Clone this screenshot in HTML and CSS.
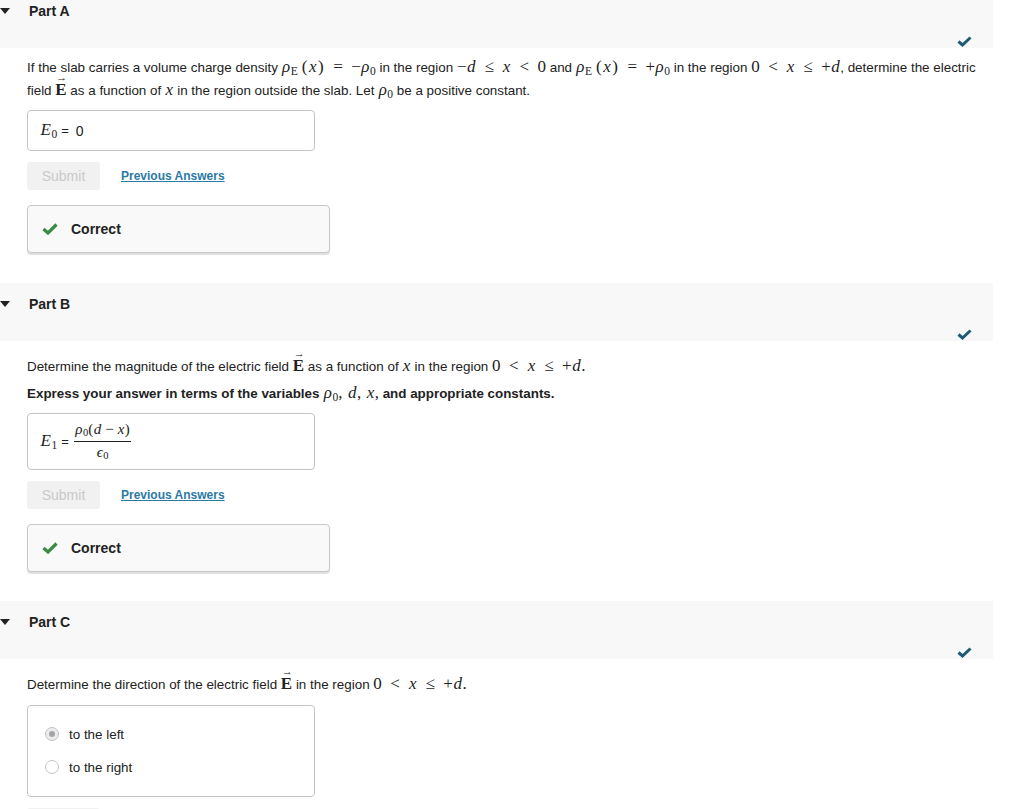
FILE: index.html
```html
<!DOCTYPE html>
<html>
<head>
<meta charset="utf-8">
<link rel="stylesheet" href="styles.css">
</head>
<body>
<div class="part part-first">
  <div class="part-head">
    <div class="head-title"><span class="caret"></span><span class="title">Part A</span></div>
    <div class="head-status"><svg class="done" width="15" height="11" viewBox="0 0 15 11"><polyline points="1.5,5.5 5.5,9 13.5,1.5" fill="none" stroke="#1f5a74" stroke-width="3"/></svg></div>
  </div>
  <div class="part-body">
    <p class="prompt">If the slab carries a volume charge density <span class="m"><span class="mi">ρ</span><span class="sub up">E</span><span class="paren">(<span class="mi">x</span>)</span><span class="rel">=</span>−<span class="mi">ρ</span><span class="sub">0</span></span> in the region <span class="m">−<span class="mi">d</span><span class="rel">≤</span><span class="mi">x</span><span class="rel">&lt;</span>0</span> and <span class="m"><span class="mi">ρ</span><span class="sub up">E</span><span class="paren">(<span class="mi">x</span>)</span><span class="rel">=</span>+<span class="mi">ρ</span><span class="sub">0</span></span> in the region <span class="m">0<span class="rel">&lt;</span><span class="mi">x</span><span class="rel">≤</span>+<span class="mi">d</span></span>, determine the electric<br>field <span class="m"><span class="vec">E</span></span> as a function of <span class="m"><span class="mi">x</span></span> in the region outside the slab. Let <span class="m"><span class="mi">ρ</span><span class="sub">0</span></span> be a positive constant.</p>
    <div class="answer-box box-a">
      <span class="m"><span class="mi">E</span><span class="sub">0</span></span><span class="eq">=</span><span class="val">0</span>
    </div>
    <div class="actions"><span class="submit">Submit</span><a class="prev" href="#">Previous Answers</a></div>
    <div class="feedback"><svg width="16" height="12" viewBox="0 0 16 12"><polyline points="1.5,6 6,10 14.5,1.5" fill="none" stroke="#3a8a43" stroke-width="3.2"/></svg><span>Correct</span></div>
  </div>
</div>

<div class="part">
  <div class="part-head">
    <div class="head-title"><span class="caret"></span><span class="title">Part B</span></div>
    <div class="head-status"><svg class="done" width="15" height="11" viewBox="0 0 15 11"><polyline points="1.5,5.5 5.5,9 13.5,1.5" fill="none" stroke="#1f5a74" stroke-width="3"/></svg></div>
  </div>
  <div class="part-body">
    <p class="prompt">Determine the magnitude of the electric field <span class="m"><span class="vec">E</span></span> as a function of <span class="m"><span class="mi">x</span></span> in the region <span class="m">0<span class="rel">&lt;</span><span class="mi">x</span><span class="rel">≤</span>+<span class="mi">d</span>.</span></p>
    <p class="prompt strong">Express your answer in terms of the variables <span class="m"><span class="mi">ρ</span><span class="sub">0</span><span class="comma">,</span><span class="mi">d</span><span class="comma">,</span><span class="mi">x</span>,</span> and appropriate constants.</p>
    <div class="answer-box box-b">
      <span class="m"><span class="mi">E</span><span class="sub">1</span></span><span class="eq">=</span><span class="frac"><span class="num"><span class="mi">ρ</span><span class="sub">0</span>(<span class="mi">d</span><span class="bin">−</span><span class="mi">x</span>)</span><span class="den"><span class="mi">ϵ</span><span class="sub">0</span></span></span>
    </div>
    <div class="actions"><span class="submit">Submit</span><a class="prev" href="#">Previous Answers</a></div>
    <div class="feedback"><svg width="16" height="12" viewBox="0 0 16 12"><polyline points="1.5,6 6,10 14.5,1.5" fill="none" stroke="#3a8a43" stroke-width="3.2"/></svg><span>Correct</span></div>
  </div>
</div>

<div class="part">
  <div class="part-head">
    <div class="head-title"><span class="caret"></span><span class="title">Part C</span></div>
    <div class="head-status"><svg class="done" width="15" height="11" viewBox="0 0 15 11"><polyline points="1.5,5.5 5.5,9 13.5,1.5" fill="none" stroke="#1f5a74" stroke-width="3"/></svg></div>
  </div>
  <div class="part-body">
    <p class="prompt">Determine the direction of the electric field <span class="m"><span class="vec">E</span></span> in the region <span class="m">0<span class="rel">&lt;</span><span class="mi">x</span><span class="rel">≤</span>+<span class="mi">d</span>.</span></p>
    <div class="choices">
      <div class="choice"><span class="radio checked"></span><span>to the left</span></div>
      <div class="choice"><span class="radio"></span><span>to the right</span></div>
    </div>
    <div class="actions"><span class="submit submit-blank"></span></div>
  </div>
</div>
</body>
</html>
```

FILE: styles.css
```css
html, body {
  margin: 0;
  padding: 0;
  background: #ffffff;
}
body {
  font-family: "Liberation Sans", Arial, sans-serif;
  font-size: 13.4px;
  color: #222222;
  overflow: hidden;
}
.part {
  margin-top: 29px;
}
.part-first {
  margin-top: -10px;
}
.part-first + .part {
  margin-top: 30px;
}
.part-head {
  width: 993px;
  height: 58px;
  box-sizing: border-box;
  background: #f8f8f8;
  padding-top: 13px;
  display: flex;
  flex-direction: column;
}
.head-title {
  display: flex;
  align-items: center;
  height: 16px;
}
.caret {
  width: 0;
  height: 0;
  border-left: 5px solid transparent;
  border-right: 5px solid transparent;
  border-top: 6px solid #222;
}
.title {
  margin-left: 19px;
  font-weight: bold;
  font-size: 14px;
  color: #222;
}
.head-status {
  display: flex;
  justify-content: flex-end;
  padding-right: 21px;
  margin-top: 17px;
}
.part-body {
  padding-left: 27px;
  padding-top: 14px;
}
.part-first .part-body {
  padding-top: 8px;
}
.prompt {
  margin: 0;
  height: 23px;
  line-height: 23px;
  white-space: nowrap;
}
.part-first .prompt {
  height: 46px;
}
.prompt + .prompt {
  margin-top: 4px;
}
.strong {
  font-weight: bold;
}
.m {
  font-family: "Liberation Serif", "Times New Roman", serif;
  font-size: 17px;
  font-weight: normal;
  line-height: 1;
}
.mi {
  font-style: italic;
  padding: 0 0.5px;
}
.sub {
  font-size: 11.5px;
  vertical-align: -3px;
  line-height: 1;
}
.sub.up {
  font-style: normal;
}
.paren {
  margin-left: 4px;
  letter-spacing: 1px;
}
.rel {
  margin: 0 8.5px;
}
.bin {
  margin: 0 3.5px;
}
.comma {
  margin-right: 5px;
}
.vec {
  position: relative;
  display: inline-block;
  font-weight: bold;
  line-height: 1;
}
.vec::before {
  content: "→";
  position: absolute;
  left: 1px;
  top: -9px;
  font-size: 11px;
  font-weight: bold;
}
.answer-box {
  width: 288px;
  box-sizing: border-box;
  border: 1px solid #c4c4c4;
  border-radius: 4px;
  margin-top: 8px;
  display: flex;
  align-items: center;
  padding-left: 12px;
  background: #fff;
}
.box-a {
  height: 41px;
}
.box-b {
  height: 57px;
}
.eq {
  margin-left: 4px;
  margin-right: 7px;
  font-size: 13px;
}
.box-b .eq {
  margin-right: 5px;
}
.val {
  font-size: 14px;
}
.frac {
  display: inline-flex;
  flex-direction: column;
  align-items: center;
  font-family: "Liberation Serif", "Times New Roman", serif;
  font-size: 15px;
  line-height: 1;
}
.num {
  padding: 0 1px 3px;
  border-bottom: 1px solid #222;
}
.den {
  padding-top: 3px;
}
.frac .sub {
  font-size: 10.5px;
  vertical-align: -2px;
}
.actions {
  margin-top: 11px;
  display: flex;
  align-items: center;
  height: 28px;
}
.submit {
  width: 73px;
  height: 28px;
  box-sizing: border-box;
  background: #f1f1f1;
  color: #c9c9c9;
  border-radius: 3px;
  font-size: 14px;
  display: flex;
  align-items: center;
  justify-content: center;
}
.prev {
  margin-left: 21px;
  font-size: 12px;
  font-weight: bold;
  color: #2b7aa6;
  text-decoration: underline;
}
.feedback {
  margin-top: 15px;
  width: 303px;
  height: 48px;
  box-sizing: border-box;
  background: #f9f9f9;
  border: 1px solid #c8c8c8;
  border-radius: 4px;
  box-shadow: 0 2px 1px rgba(0, 0, 0, 0.13);
  display: flex;
  align-items: center;
  padding-left: 14px;
}
.feedback span {
  margin-left: 13px;
  font-size: 14px;
  font-weight: bold;
  color: #222;
}
.choices {
  margin-top: 9px;
  width: 288px;
  height: 92px;
  box-sizing: border-box;
  border: 1px solid #c4c4c4;
  border-radius: 4px;
  padding-top: 20px;
  padding-left: 17px;
  display: flex;
  flex-direction: column;
  gap: 17px;
}
.choice {
  display: flex;
  align-items: center;
  height: 16px;
  font-size: 13.4px;
}
.radio {
  width: 14px;
  height: 14px;
  box-sizing: border-box;
  border: 1px solid #c2c2c6;
  border-radius: 50%;
  background: #fff;
  margin-right: 10px;
  display: flex;
  align-items: center;
  justify-content: center;
}
.radio.checked {
  background: #ececec;
}
.radio.checked::after {
  content: "";
  width: 6px;
  height: 6px;
  border-radius: 50%;
  background: #a4a4a8;
}
.choices + .actions {
  margin-top: 11px;
}
```
